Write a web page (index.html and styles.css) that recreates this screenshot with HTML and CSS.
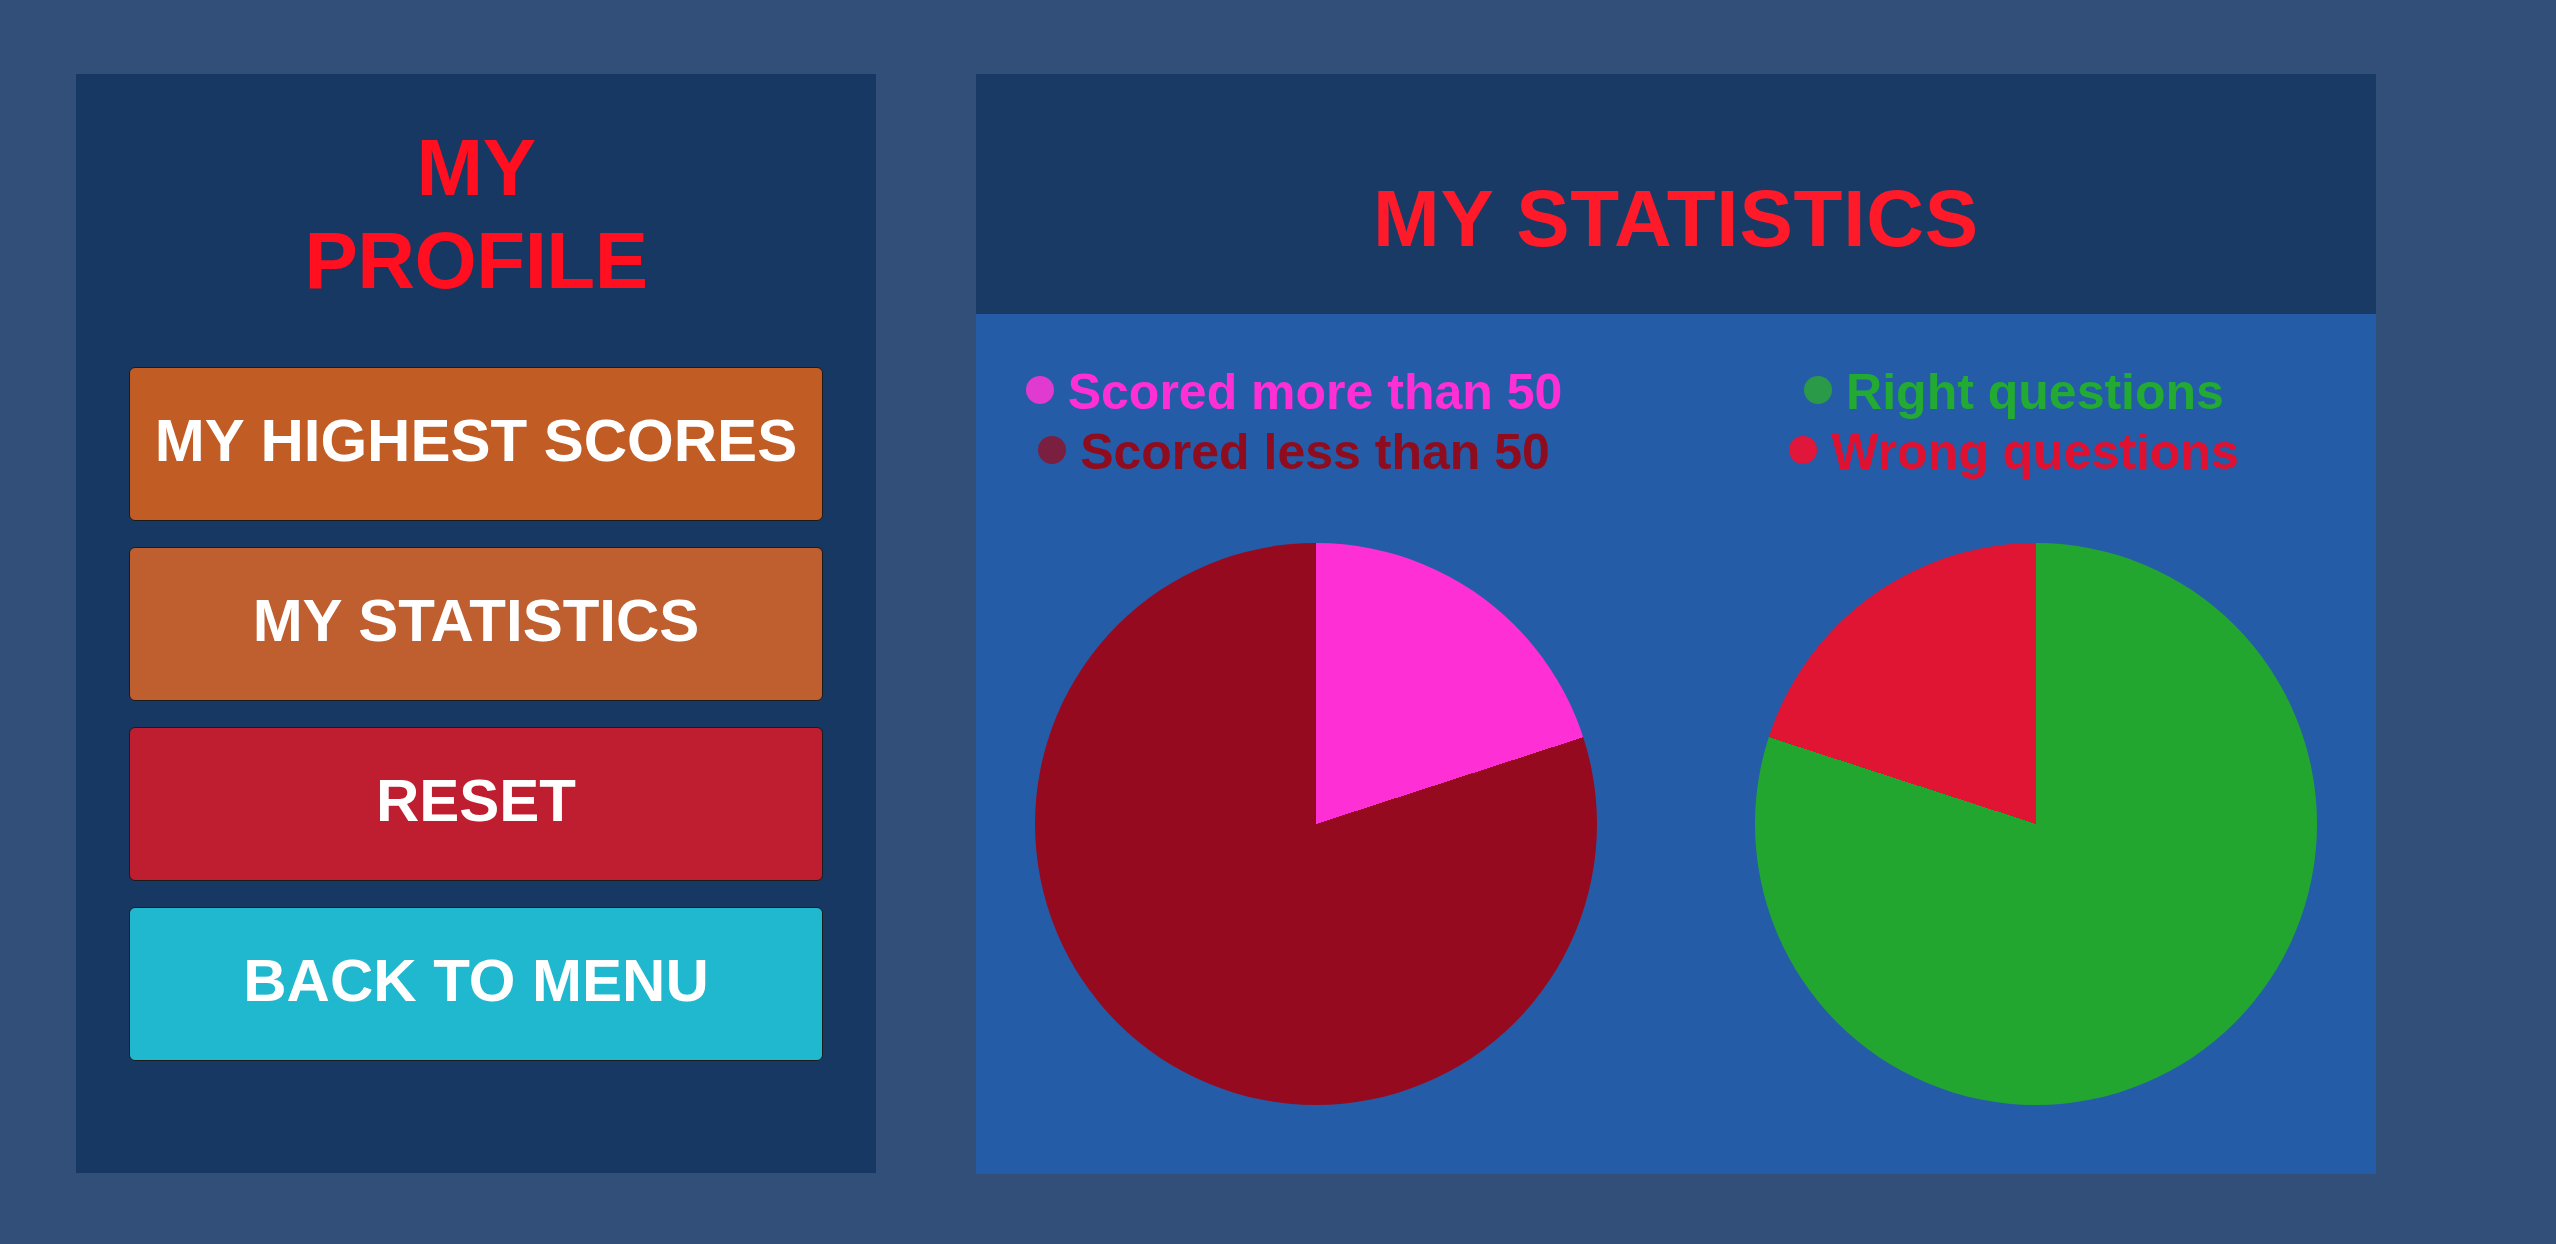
FILE: index.html
```html
<!DOCTYPE html>
<html lang="en">
<head>
<meta charset="utf-8">
<title>My Profile</title>
<link rel="stylesheet" href="styles.css">
</head>
<body>
<div class="screen">
  <aside class="profile">
    <h1 class="profile-title">MY<br>PROFILE</h1>
    <nav class="menu">
      <button class="btn btn-scores">MY HIGHEST SCORES</button>
      <button class="btn btn-stats">MY STATISTICS</button>
      <button class="btn btn-reset">RESET</button>
      <button class="btn btn-back">BACK TO MENU</button>
    </nav>
  </aside>
  <main class="stats">
    <header class="stats-header">
      <h2 class="stats-title">MY STATISTICS</h2>
    </header>
    <section class="stats-body">
      <div class="chart-col">
        <ul class="legend">
          <li class="legend-item"><span class="dot dot-more"></span><span class="lbl lbl-more">Scored more than 50</span></li>
          <li class="legend-item"><span class="dot dot-less"></span><span class="lbl lbl-less">Scored less than 50</span></li>
        </ul>
        <div class="pie pie-scores"></div>
      </div>
      <div class="chart-col">
        <ul class="legend">
          <li class="legend-item"><span class="dot dot-right"></span><span class="lbl lbl-right">Right questions</span></li>
          <li class="legend-item"><span class="dot dot-wrong"></span><span class="lbl lbl-wrong">Wrong questions</span></li>
        </ul>
        <div class="pie pie-questions"></div>
      </div>
    </section>
  </main>
</div>
</body>
</html>
```

FILE: styles.css
```css
* { box-sizing: border-box; }
html, body {
  margin: 0;
  padding: 0;
  background: #324f7a;
  font-family: "Liberation Sans", Arial, sans-serif;
  font-weight: bold;
}
.screen {
  width: 2556px;
  height: 1244px;
  display: flex;
  align-items: flex-start;
  padding: 74px 0 0 76px;
  gap: 100px;
}
.profile {
  width: 800px;
  height: 1099px;
  background: #173863;
  padding: 47px 53px 0;
  display: flex;
  flex-direction: column;
}
.profile-title {
  margin: 0;
  color: #ff0f1f;
  font-size: 80px;
  line-height: 93px;
  letter-spacing: -0.5px;
  text-align: center;
  font-weight: bold;
}
.menu {
  margin-top: 60px;
  display: flex;
  flex-direction: column;
  gap: 26px;
}
.btn {
  height: 154px;
  width: 100%;
  border: 1px solid #1b1b1b;
  border-radius: 6px;
  color: #ffffff;
  font-family: "Liberation Sans", Arial, sans-serif;
  font-weight: bold;
  font-size: 60px;
  line-height: 1;
  padding: 0 0 7px;
  display: flex;
  align-items: center;
  justify-content: center;
}
.btn-scores { background: #c15d24; }
.btn-stats { background: #bf5e2f; }
.btn-reset { background: #be1e2f; }
.btn-back { background: #20b8cf; }

.stats {
  width: 1400px;
  height: 1100px;
  display: flex;
  flex-direction: column;
}
.stats-header {
  height: 240px;
  background: #1a3a66;
  display: flex;
  justify-content: center;
  padding-top: 98px;
}
.stats-title {
  margin: 0;
  color: #ff1a2a;
  font-size: 80px;
  line-height: 93px;
  font-weight: bold;
  letter-spacing: 0.8px;
}
.stats-body {
  flex: 1;
  background: #245ca8;
  display: flex;
  gap: 40px;
  padding-top: 48px;
}
.chart-col {
  width: 680px;
  display: flex;
  flex-direction: column;
  align-items: center;
}
.legend {
  list-style: none;
  margin: 0;
  padding: 0 44px 0 0;
  display: flex;
  flex-direction: column;
  align-items: center;
}
.legend-item {
  display: flex;
  align-items: center;
  gap: 14px;
  height: 60px;
  font-size: 50px;
  line-height: 60px;
}
.dot {
  width: 28px;
  height: 28px;
  border-radius: 50%;
  flex: none;
  margin-top: -4px;
}
.dot-more { background: #e03ad0; }
.dot-less { background: #7a1f40; }
.dot-right { background: #2a9a48; }
.dot-wrong { background: #e0163a; }
.lbl-more { color: #ff2fd6; }
.lbl-less { color: #8e0c1e; }
.lbl-right { color: #22aa33; }
.lbl-wrong { color: #e01030; }

.pie {
  width: 562px;
  height: 562px;
  border-radius: 50%;
  margin-top: 61px;
}
.pie-scores {
  background: conic-gradient(#ff2fd6 0deg 72deg, #960a1f 72deg 360deg);
}
.pie-questions {
  background: conic-gradient(#22a630 0deg 288deg, #e01433 288deg 360deg);
}
```
